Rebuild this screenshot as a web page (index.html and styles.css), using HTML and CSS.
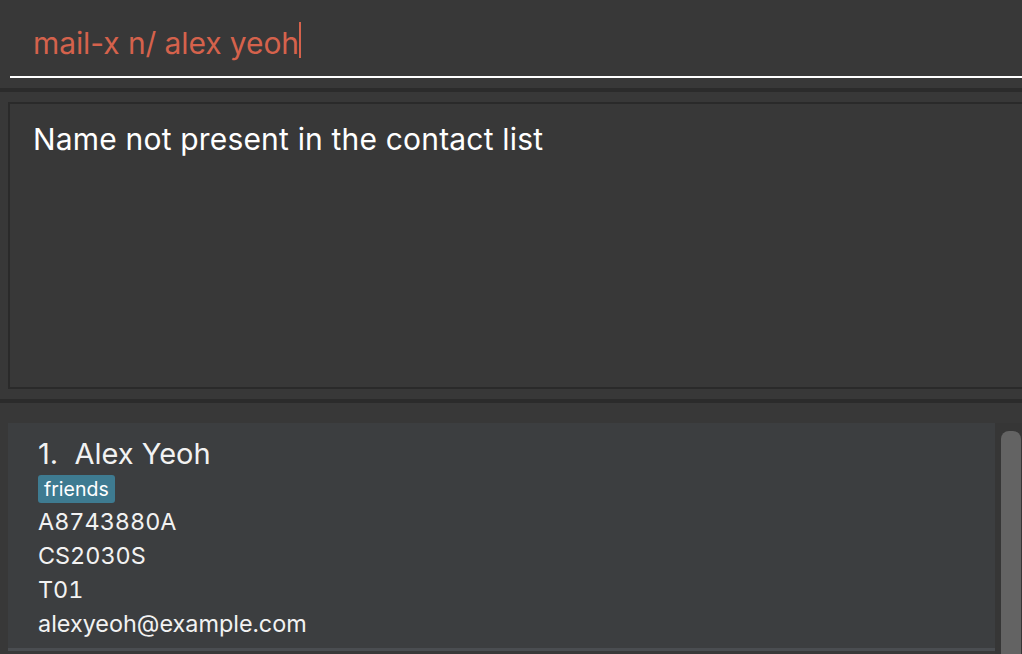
FILE: index.html
```html
<!DOCTYPE html>
<html>
<head>
<meta charset="utf-8">
<link rel="stylesheet" href="styles.css">
</head>
<body>
<div class="app">
  <div class="command">
    <div class="command-field"><span class="command-text">mail-x n/ alex yeoh</span><span class="caret"></span></div>
  </div>
  <div class="sep"></div>
  <div class="result-pane">
    <div class="result-box">Name not present in the contact list</div>
  </div>
  <div class="sep"></div>
  <div class="list-pane">
    <div class="list">
      <div class="card">
        <div class="name">1.&nbsp; Alex Yeoh</div>
        <div class="tags"><span class="tag">friends</span></div>
        <div class="field">A8743880A</div>
        <div class="field">CS2030S</div>
        <div class="field">T01</div>
        <div class="field">alexyeoh@example.com</div>
      </div>
    </div>
    <div class="scroll-track"><div class="scroll-thumb"></div></div>
  </div>
</div>
</body>
</html>
```
FILE: styles.css
```css
html, body {
  margin: 0;
  padding: 0;
  background: #383838;
  overflow: hidden;
}
body {
  font-family: Inter, "Liberation Sans", Arial, sans-serif;
  color: #f2f2f2;
}
.app {
  width: 1022px;
  height: 654px;
  display: flex;
  flex-direction: column;
}
.command {
  height: 88px;
  padding-left: 10px;
  box-sizing: border-box;
}
.command-field {
  height: 78px;
  border-bottom: 2px solid #ffffff;
  box-sizing: border-box;
  padding-left: 23px;
  padding-top: 26px;
  display: flex;
  align-items: flex-start;
}
.command-text {
  color: #d5624c;
  font-size: 30px;
  line-height: 34px;
  letter-spacing: -0.1px;
}
.caret {
  width: 2px;
  height: 36px;
  margin-top: -4px;
  background: #d5624c;
}
.sep {
  height: 4px;
  background: #2b2b2b;
  flex: none;
}
.result-pane {
  height: 307px;
  padding: 10px 0 0 8px;
  box-sizing: border-box;
}
.result-box {
  height: 287px;
  border: 2px solid #2a2a2a;
  border-right: none;
  box-sizing: border-box;
  padding: 18px 0 0 23px;
  font-size: 30px;
  line-height: 34px;
  letter-spacing: 0.18px;
  color: #ffffff;
}
.list-pane {
  flex: 1;
  display: flex;
  padding-top: 20px;
  box-sizing: border-box;
  min-height: 0;
}
.list {
  flex: 1;
  padding-left: 8px;
  display: flex;
  flex-direction: column;
}
.card {
  background: #3c3e40;
  padding: 14px 0 0 30px;
  height: 228px;
  box-sizing: border-box;
  border-bottom: 3px solid #4a4d51;
}
.name {
  font-size: 29px;
  line-height: 34px;
  color: #f2f2f2;
}
.tags {
  margin-top: 4px;
  height: 30px;
}
.tag {
  display: inline-block;
  background: #3e7b91;
  color: #ffffff;
  font-size: 19.5px;
  line-height: 28px;
  padding: 0 6px;
  border-radius: 3px;
}
.field {
  font-size: 23.4px;
  line-height: 34px;
  font-variant-numeric: tabular-nums;
  color: #f2f2f2;
}
.scroll-track {
  width: 27px;
  background: #363636;
  padding: 8px 1px 0 6px;
  box-sizing: border-box;
}
.scroll-thumb {
  width: 20px;
  height: 240px;
  background: #636363;
  border-radius: 8px;
}
```
